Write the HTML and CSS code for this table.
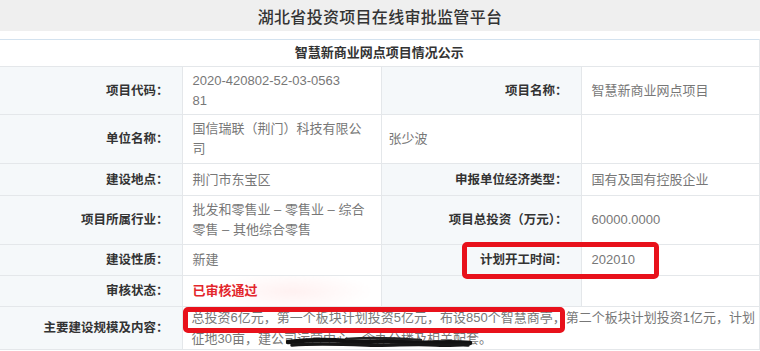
FILE: index.html
```html
<!DOCTYPE html>
<html lang="zh-CN">
<head>
<meta charset="utf-8">
<title>湖北省投资项目在线审批监管平台</title>
<link rel="stylesheet" href="styles.css">
</head>
<body>
<header class="topbar">湖北省投资项目在线审批监管平台</header>
<div class="sheet">
  <table class="info">
    <colgroup>
      <col class="c1"><col class="c2"><col class="c3"><col class="c4">
    </colgroup>
    <tr class="r-title"><td colspan="4" class="title">智慧新商业网点项目情况公示</td></tr>
    <tr class="r-48">
      <td class="lbl">项目代码：</td>
      <td class="val">2020-420802-52-03-0563<br>81</td>
      <td class="lbl">项目名称：</td>
      <td class="val">智慧新商业网点项目</td>
    </tr>
    <tr class="r-49">
      <td class="lbl">单位名称：</td>
      <td class="val">国信瑞联（荆门）科技有限公<br>司</td>
      <td class="val plain">张少波</td>
      <td class="val"></td>
    </tr>
    <tr class="r-32">
      <td class="lbl">建设地点：</td>
      <td class="val">荆门市东宝区</td>
      <td class="lbl">申报单位经济类型：</td>
      <td class="val">国有及国有控股企业</td>
    </tr>
    <tr class="r-49">
      <td class="lbl">项目所属行业：</td>
      <td class="val">批发和零售业 – 零售业 – 综合<br>零售 – 其他综合零售</td>
      <td class="lbl">项目总投资（万元）：</td>
      <td class="val">60000.0000</td>
    </tr>
    <tr class="r-31">
      <td class="lbl">建设性质：</td>
      <td class="val">新建</td>
      <td class="lbl">计划开工时间：</td>
      <td class="val">202010</td>
    </tr>
    <tr class="r-31">
      <td class="lbl">审核状态：</td>
      <td class="val status">已审核通过</td>
      <td class="lbl"></td>
      <td class="val"></td>
    </tr>
    <tr class="r-43">
      <td class="lbl">主要建设规模及内容：</td>
      <td colspan="3" class="val wide">
        <div class="wide-text">
          <div class="line">总投资6亿元，第一个板块计划投资5亿元，布设850个智慧商亭，第二个板块计划投资1亿元，计划</div>
          <div class="line">征地30亩，建公司运营中心，含办公楼及相关配套。</div>
        </div>
      </td>
    </tr>
  </table>
  <div class="mark mark-date"></div>
  <div class="mark mark-content"></div>
  <svg class="scribble" width="200" height="16" viewBox="0 0 200 16">
    <path d="M2 8 C20 6 40 5 60 7 C80 9 100 6 120 8 C140 10 160 7 184 9" fill="none" stroke="#111" stroke-width="4.5" stroke-linecap="round"/>
    <path d="M6 11 C30 9 55 10 80 11 C105 12 130 9 150 11 C165 12 175 10 182 11" fill="none" stroke="#161616" stroke-width="3.5" stroke-linecap="round"/>
    <path d="M60 5 C85 3 110 4 135 6" fill="none" stroke="#222" stroke-width="2.5" stroke-linecap="round"/>
  </svg>
</div>
</body>
</html>
```
FILE: styles.css
```css
html, body {
  margin: 0;
  padding: 0;
  background: #ffffff;
}
body {
  width: 760px;
  height: 351px;
  overflow: hidden;
  font-family: "Liberation Sans", "Noto Sans CJK SC", sans-serif;
  color: #333;
}
.topbar {
  height: 31px;
  background: #efefef;
  display: flex;
  align-items: center;
  justify-content: center;
  font-size: 16px;
  font-weight: 500;
  color: #333;
  letter-spacing: 0.3px;
}
.sheet {
  position: relative;
  margin-top: 8px;
  width: 760px;
}
.info {
  border-collapse: collapse;
  table-layout: fixed;
  width: 759px;
  border-top: 1px solid #d3e2ef;
}
.c1 { width: 182px; }
.c2 { width: 199px; }
.c3 { width: 200px; }
.c4 { width: 178px; }
.info td {
  border: 1px solid #e4e7ea;
  padding: 0 10px;
  line-height: 20px;
  vertical-align: middle;
}
.info tr td:first-child {
  border-left: none;
}
.info tr.r-title td {
  border-top: 1px solid #d3e2ef;
}
.r-title { height: 27px; }
.r-48 { height: 48px; }
.r-49 { height: 49px; }
.r-32 { height: 32px; }
.r-31 { height: 31px; }
.r-43 { height: 43px; }
.title {
  text-align: center;
  font-size: 13px;
  font-weight: 700;
  color: #333;
  background: #fff;
}
.lbl {
  background: #f5f8fa;
  text-align: right;
  font-size: 12.5px;
  font-weight: 700;
  color: #333;
  padding-right: 13px !important;
  white-space: nowrap;
}
.val {
  background: #fff;
  font-size: 13px;
  color: #777;
  text-align: left;
}
.plain {
  padding-left: 7px !important;
}
.status {
  color: #e3262c;
  font-weight: 700;
  background: radial-gradient(ellipse 80px 20px at 110px 50%, rgba(255, 200, 200, 0.25), rgba(255, 255, 255, 0) 100%), #fff;
}
.wide {
  padding: 0 0 0 9px !important;
  overflow: hidden;
}
.wide-text {
  white-space: nowrap;
  line-height: 21px;
  font-size: 13px;
  color: #777;
}
.mark {
  position: absolute;
  border: 5px solid #e8111b;
  border-radius: 5px;
  box-sizing: border-box;
}
.mark-date {
  left: 462px;
  top: 203px;
  width: 197px;
  height: 37px;
}
.mark-content {
  left: 183px;
  top: 268px;
  width: 382px;
  height: 26px;
}
.scribble {
  position: absolute;
  left: 286px;
  top: 295px;
}
```
